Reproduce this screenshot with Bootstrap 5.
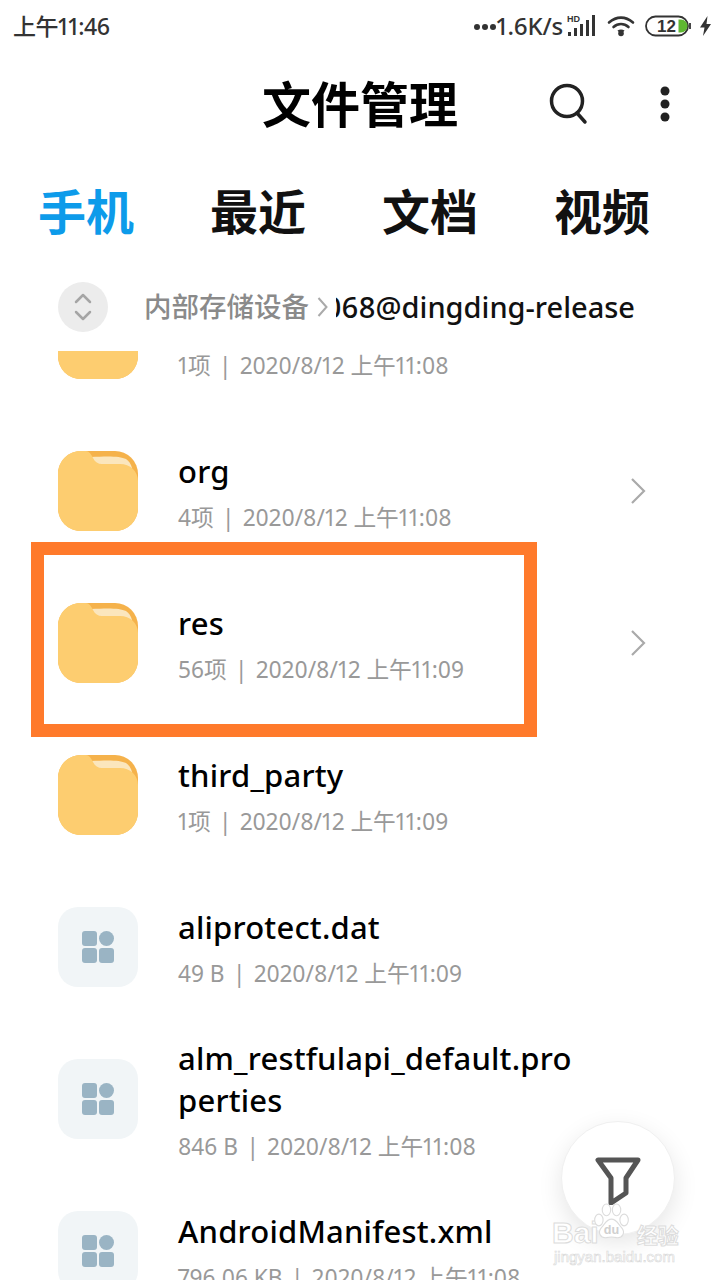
<!DOCTYPE html>
<html lang="zh-CN">
<head>
  <meta charset="UTF-8" />
  <meta name="viewport" content="width=device-width, initial-scale=1.0"/>
  <title>文件管理</title>
  <link href="https://cdn.jsdelivr.net/npm/bootstrap@5.3.3/dist/css/bootstrap.min.css" rel="stylesheet">
  <style>
    body {
      width: 720px;
      height: 1280px;
      overflow: hidden;
      position: relative;
      background-color: #fff;
      color: #000;
      font-family: "Noto Sans", "Noto Sans CJK SC", sans-serif;
      font-variant-numeric: proportional-nums;
    }

    .status-bar { height: 52px; padding: 0 8px 0 13px; color: #333; }
    .status-time { font-size: 23px; font-weight: 500; letter-spacing: -0.5px; }
    .status-speed { font-size: 24px; font-weight: 500; letter-spacing: -0.2px; }

    .app-header { height: 104px; display: grid; grid-template-columns: 1fr auto 1fr; align-items: center; }
    .app-title { font-size: 49px; font-weight: 700; line-height: 1; margin: 0; }
    .header-tools { padding-left: 90px; gap: 70px; }

    .tab-strip { height: 112px; padding-left: 38px; gap: 76px; }
    .tab-item { font-size: 48px; font-weight: 700; line-height: 1; color: #111; }
    .tab-item.is-active { color: #0d9bea; }

    .crumb-bar { height: 83px; padding: 0 0 6px 58px; font-size: 27.5px; }
    .crumb-toggle { width: 50px; height: 50px; border-radius: 50%; background: #ececec; margin-right: 36px; }
    .crumb-root { color: #8a8a8a; font-weight: 500; }
    .crumb-path { width: 299px; overflow: hidden; white-space: nowrap; font-size: 29px; font-weight: 500; color: #111; }

    .file-list { height: 929px; overflow: hidden; }
    .file-rows { margin-top: -88px; }
    .file-row { height: 152px; padding: 0 74px 0 58px; }
    .file-icon { width: 80px; height: 80px; flex: none; margin-right: 40px; }
    .file-title { font-size: 31px; font-weight: 500; line-height: 42px; letter-spacing: 0.2px; width: 405px; word-break: break-all; }
    .file-meta { font-size: 22.7px; line-height: 28px; margin-top: 12px; color: #999; white-space: nowrap; }
    .file-sep { margin: 0 2.5px; }
    .file-chevron { margin-left: auto; flex: none; }

    .app-tile { background: #f1f5f7; border-radius: 20px; }

    .mark-box { position: absolute; left: 31px; top: 542px; width: 506px; height: 195px; border: 13px solid #ff7a2b; }

    .filter-fab {
      position: absolute;
      left: 561px;
      top: 1121px;
      width: 114px;
      height: 114px;
      border-radius: 50%;
      background: #fff;
      border: 1px solid #f0f0f0;
      box-shadow: 0 8px 24px rgba(0, 0, 0, 0.1);
    }

    .baidu-mark {
      position: absolute;
      left: 552px;
      top: 1218px;
      width: 160px;
      color: #fff;
      font-family: "Liberation Sans", "Noto Sans CJK SC", sans-serif;
      -webkit-text-stroke: 1px #dcdcdc;
      line-height: 1;
    }
    .baidu-word { font-size: 30px; font-weight: 700; }
    .baidu-cn { font-size: 21px; font-weight: 700; margin-left: 38px; }
    .baidu-url { font-size: 15px; -webkit-text-stroke: 0.6px #d8d8d8; margin-top: 1px; margin-left: 2px; }
    .baidu-paw { position: absolute; left: 41px; top: -16px; }
  </style>
</head>
<body>

  <!-- Status bar -->
  <div class="status-bar d-flex align-items-center justify-content-between">
    <span class="status-time">上午11:46</span>
    <div class="d-flex align-items-center">
      <svg width="24" height="10" viewBox="0 0 24 10"><g fill="#333"><circle cx="4" cy="6" r="3"/><circle cx="12" cy="6" r="3"/><circle cx="20" cy="6" r="3"/></g></svg>
      <span class="status-speed">1.6K/s</span>
      <svg class="ms-1" width="28" height="24" viewBox="0 0 28 24">
        <text x="0" y="8" font-size="9" font-weight="700" font-family="Liberation Sans" fill="#333">HD</text>
        <g fill="#333"><rect x="1" y="18" width="3" height="4"/><rect x="7" y="14" width="3" height="8"/><rect x="13" y="10" width="3" height="12"/><rect x="19" y="6" width="3" height="16"/><rect x="25" y="1" width="3" height="21"/></g>
      </svg>
      <svg style="margin-left:12px" width="28" height="22" viewBox="0 0 28 22">
        <g fill="none" stroke="#333" stroke-width="2.6" stroke-linecap="round"><path d="M2 7.5C9.500 1 18.500 1 26 7.500"/><path d="M6.500 12C11 8 17 8 21.500 12"/></g>
        <path d="M10.500 15.500C12.500 14 15.500 14 17.500 15.500L14 20z" fill="#333"/>
        <circle cx="14" cy="18.500" r="2.800" fill="#333"/>
      </svg>
      <svg style="margin-left:10px" width="47" height="22" viewBox="0 0 47 22">
        <rect x="1" y="1.500" width="42" height="19" rx="9.500" fill="none" stroke="#333" stroke-width="1.800"/>
        <text x="12" y="17" font-size="17" font-weight="700" font-family="Liberation Sans" fill="#333">12</text>
        <path d="M33.500 4.500h2.500a6.500 6.500 0 0 1 0 13h-2.500z" fill="#5fb832"/>
        <path d="M45 8v6" stroke="#333" stroke-width="1.800"/>
      </svg>
      <svg style="margin-left:7px" width="13" height="22" viewBox="0 0 13 22"><path d="M8.500 1L1 12.500h4.500L4 21l8-12H7.500z" fill="#333"/></svg>
    </div>
  </div>

  <!-- Title row -->
  <header class="app-header">
    <div></div>
    <h1 class="app-title">文件管理</h1>
    <div class="header-tools d-flex align-items-center">
      <svg width="42" height="42" viewBox="0 0 42 42"><g fill="none" stroke="#222" stroke-width="3.500" stroke-linecap="round"><circle cx="19" cy="18" r="15.500"/><path d="M29 30l8 9"/></g></svg>
      <svg width="10" height="36" viewBox="0 0 10 36"><g fill="#222"><circle cx="5" cy="5" r="4.500"/><circle cx="5" cy="18" r="4.500"/><circle cx="5" cy="31" r="4.500"/></g></svg>
    </div>
  </header>

  <!-- Tabs -->
  <nav class="tab-strip d-flex align-items-center">
    <span class="tab-item is-active">手机</span>
    <span class="tab-item">最近</span>
    <span class="tab-item">文档</span>
    <span class="tab-item">视频</span>
  </nav>

  <!-- Breadcrumb -->
  <div class="crumb-bar d-flex align-items-center">
    <div class="crumb-toggle d-flex align-items-center justify-content-center flex-shrink-0">
      <svg width="20" height="32" viewBox="0 0 20 32"><g fill="none" stroke="#a5a5a5" stroke-width="2.500" stroke-linecap="round" stroke-linejoin="round"><path d="M3 11l7-7 7 7"/><path d="M3 21l7 7 7-7"/></g></svg>
    </div>
    <span class="crumb-root">内部存储设备</span>
    <svg class="mx-2" width="11" height="22" viewBox="0 0 11 22"><path d="M1.500 2l8 9-8 9" fill="none" stroke="#aaa" stroke-width="2"/></svg>
    <div class="crumb-path d-flex justify-content-end">068@dingding-release</div>
  </div>

  <!-- File list -->
  <div class="file-list">
    <div class="file-rows" id="rows"></div>
  </div>

  <!-- Annotation, filter button and watermark -->
  <div class="mark-box"></div>

  <div class="filter-fab d-flex align-items-center justify-content-center">
    <svg width="50" height="54" viewBox="0 0 50 54"><path d="M5 9H45L33 27V42L18 52V27Z" fill="none" stroke="#555" stroke-width="5" stroke-linejoin="round"/></svg>
  </div>

  <div class="baidu-mark">
    <svg class="baidu-paw" width="37" height="41" viewBox="0 0 44 48">
      <g fill="#fff" stroke="#dcdcdc" stroke-width="1.300">
        <ellipse cx="7" cy="21" rx="5" ry="7"/><ellipse cx="16" cy="9" rx="5" ry="7"/><ellipse cx="28" cy="9" rx="5" ry="7"/><ellipse cx="37" cy="21" rx="5" ry="7"/>
        <path d="M22 20c6 0 8 6 12 10 5 6 1 13-6 12-4-1-8-1-12 0-7 1-11-6-6-12 4-4 6-10 12-10z"/>
      </g>
      <text x="22" y="38" text-anchor="middle" font-size="15" font-weight="700" font-family="Liberation Sans" fill="#d0d0d0" stroke="none">du</text>
    </svg>
    <div><span class="baidu-word">Bai</span><span class="baidu-cn">经验</span></div>
    <div class="baidu-url">jingyan.baidu.com</div>
  </div>

  <script src="https://cdn.jsdelivr.net/npm/bootstrap@5.3.3/dist/js/bootstrap.bundle.min.js"></script>
  <script>
    const folderIcon = `<svg class="file-icon" viewBox="0 0 80 80">
      <rect width="80" height="80" rx="23" fill="#f5b24b"/>
      <path d="M33 6C50 5 62 5 68 8C71 10 73 13 74 17L40 16C37 14 35 10 33 6Z" fill="#fbe6bd"/>
      <path d="M23 0H28C31 0 33 3 35 7C37 11 40 13 44 13H62C72 13 80 20 80 30V57C80 70 70 80 57 80H23C10 80 0 70 0 57V23C0 10 10 0 23 0Z" fill="#fdcd70"/>
    </svg>`;

    const appIcon = `<div class="file-icon app-tile d-flex align-items-center justify-content-center">
      <svg width="32" height="32" viewBox="0 0 32 32"><g fill="#9ab4c4">
        <rect width="15" height="15" rx="3"/><circle cx="24.500" cy="7.500" r="7.500"/>
        <rect y="17" width="15" height="15" rx="3"/><rect x="17" y="17" width="15" height="15" rx="3"/>
      </g></svg>
    </div>`;

    const chevron = `<svg class="file-chevron" width="16" height="28" viewBox="0 0 16 28"><path d="M2 2l12 12L2 26" fill="none" stroke="#aaa" stroke-width="2.200"/></svg>`;

    const sep = `<span class="file-sep">|</span>`;
    const files = [
      { name: "&nbsp;", meta: `1项 ${sep} 2020/8/12 上午11:08`, icon: folderIcon },
      { name: "org", meta: `4项 ${sep} 2020/8/12 上午11:08`, icon: folderIcon, more: true },
      { name: "res", meta: `56项 ${sep} 2020/8/12 上午11:09`, icon: folderIcon, more: true },
      { name: "third_party", meta: `1项 ${sep} 2020/8/12 上午11:09`, icon: folderIcon },
      { name: "aliprotect.dat", meta: `49 B ${sep} 2020/8/12 上午11:09`, icon: appIcon },
      { name: "alm_restfulapi_default.properties", meta: `846 B ${sep} 2020/8/12 上午11:08`, icon: appIcon },
      { name: "AndroidManifest.xml", meta: `796.06 KB ${sep} 2020/8/12 上午11:08`, icon: appIcon }
    ];

    document.getElementById("rows").innerHTML = files.map(f => `
      <div class="file-row d-flex align-items-center">
        ${f.icon}
        <div>
          <div class="file-title">${f.name}</div>
          <div class="file-meta">${f.meta}</div>
        </div>
        ${f.more ? chevron : ""}
      </div>`).join("");
  </script>
</body>
</html>
